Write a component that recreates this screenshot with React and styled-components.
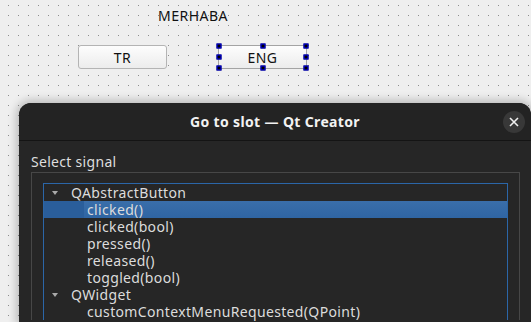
import styled, { createGlobalStyle } from "styled-components";

const GlobalStyle = createGlobalStyle`
  html, body {
    margin: 0;
    padding: 0;
    overflow: hidden;
  }
  body {
    width: 531px;
    height: 322px;
    font-family: "Noto Sans", "DejaVu Sans", sans-serif;
    background-color: #efefef;
    background-image: radial-gradient(circle at 0.5px 0.5px, #8e8e8e 0.75px, transparent 0.8px);
    background-size: 10px 10px;
    background-position: 8px 5px;
  }
`;

const Canvas = styled.div`
  display: flex;
  flex-direction: column;
  height: 322px;
  overflow: hidden;
`;

const FormLabel = styled.div`
  margin: 6px 0 0 158px;
  font-size: 14px;
  line-height: 20px;
  letter-spacing: 0.5px;
  color: #111;
`;

const ButtonRow = styled.div`
  display: flex;
  gap: 51px;
  margin: 19px 0 0 78px;
`;

const FormButton = styled.div`
  position: relative;
  width: 89px;
  height: 24px;
  box-sizing: border-box;
  border: 1px solid ${(p) => (p.$selected ? "#a4a4a4" : "#b4b4b4")};
  border-radius: ${(p) => (p.$selected ? "0" : "3px")};
  background: linear-gradient(#fdfdfd, #ececec);
  display: flex;
  align-items: center;
  justify-content: center;
  font-size: 14px;
  letter-spacing: 0.4px;
  color: #111;
`;

const Handle = styled.span`
  position: absolute;
  width: 5px;
  height: 5px;
  background: #000;
  border: 1px solid #0000ff;
  box-sizing: border-box;
  transform: translate(-50%, -50%);
`;

const Dialog = styled.div`
  margin: 34px 0 0 19px;
  width: 512px;
  flex: 1;
  background: #262626;
  border-radius: 12px 12px 0 0;
  box-shadow: 0 0 8px 3px rgba(0, 0, 0, 0.22);
  display: flex;
  flex-direction: column;
`;

const TitleBar = styled.div`
  height: 37px;
  display: grid;
  grid-template-columns: 1fr auto 1fr;
  align-items: center;
  background: #232323;
  border-radius: 12px 12px 0 0;
  border-bottom: 1px solid #141414;
`;

const Title = styled.div`
  grid-column: 2;
  font-size: 14px;
  font-weight: 700;
  letter-spacing: 0.35px;
  color: #f2f2f2;
`;

const CloseButton = styled.div`
  justify-self: end;
  margin-right: 6px;
  width: 22px;
  height: 22px;
  border-radius: 50%;
  background: #383838;
  display: flex;
  align-items: center;
  justify-content: center;
`;

const Body = styled.div`
  padding: 12px 11px 0 12px;
`;

const SectionLabel = styled.div`
  font-size: 14px;
  line-height: 17px;
  letter-spacing: 0.3px;
  color: #dedede;
`;

const Frame = styled.div`
  margin-top: 2px;
  border: 1px solid #474747;
  border-bottom: none;
  padding: 10px 11px 0 11px;
`;

const Tree = styled.div`
  border: 1px solid #2b66a8;
  border-bottom: none;
`;

const Row = styled.div`
  display: flex;
  align-items: center;
  height: 17px;
  font-size: 14px;
  line-height: 17px;
  letter-spacing: 0.35px;
  color: #dcdcdc;
  background: ${(p) => (p.$selected ? "#2a5e9b" : "transparent")};
`;

const Branch = styled.div`
  width: ${(p) => (p.$child ? "40px" : "24px")};
  display: flex;
  justify-content: center;
  flex-shrink: 0;
`;

const Arrow = styled.span`
  width: 0;
  height: 0;
  margin-left: -3px;
  border-left: 3.5px solid transparent;
  border-right: 3.5px solid transparent;
  border-top: 4px solid #a9a9a9;
`;

const Cell = styled.div`
  flex: 1;
  height: 100%;
  display: flex;
  align-items: center;
  padding-left: 3px;
  background: ${(p) => (p.$selected ? "linear-gradient(#3a6eaa, #2f65a3)" : "transparent")};
`;

const groups = [
  {
    name: "QAbstractButton",
    signals: ["clicked()", "clicked(bool)", "pressed()", "released()", "toggled(bool)"],
  },
  {
    name: "QWidget",
    signals: ["customContextMenuRequested(QPoint)"],
  },
];

const handles = [
  [0, 0], [50, 0], [100, 0],
  [0, 50], [100, 50],
  [0, 100], [50, 100], [100, 100],
];

export default function App() {
  return (
    <>
      <GlobalStyle />
      <Canvas>
        <FormLabel>MERHABA</FormLabel>
        <ButtonRow>
          <FormButton>TR</FormButton>
          <FormButton $selected>
            ENG
            {handles.map(([x, y]) => (
              <Handle key={`${x}-${y}`} style={{ left: `${x}%`, top: `${y}%` }} />
            ))}
          </FormButton>
        </ButtonRow>
        <Dialog>
          <TitleBar>
            <Title>Go to slot — Qt Creator</Title>
            <CloseButton>
              <svg width="10" height="10" viewBox="0 0 10 10">
                <path d="M1 1L9 9M9 1L1 9" stroke="#f0f0f0" strokeWidth="1.6" />
              </svg>
            </CloseButton>
          </TitleBar>
          <Body>
            <SectionLabel>Select signal</SectionLabel>
            <Frame>
              <Tree>
                {groups.map((g) => (
                  <div key={g.name}>
                    <Row>
                      <Branch>
                        <Arrow />
                      </Branch>
                      <Cell>{g.name}</Cell>
                    </Row>
                    {g.signals.map((s, i) => {
                      const sel = g.name === "QAbstractButton" && i === 0;
                      return (
                        <Row key={s} $selected={sel}>
                          <Branch $child />
                          <Cell $selected={sel}>{s}</Cell>
                        </Row>
                      );
                    })}
                  </div>
                ))}
              </Tree>
            </Frame>
          </Body>
        </Dialog>
      </Canvas>
    </>
  );
}
